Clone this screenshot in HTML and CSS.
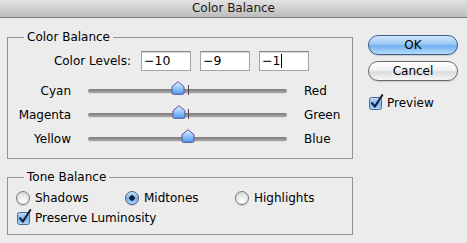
FILE: index.html
```html
<!DOCTYPE html>
<html lang="en">
<head>
  <meta charset="UTF-8">
  <title>Color Balance</title>
  <link rel="stylesheet" href="styles.css">
</head>
<body>
  <div class="titlebar">Color Balance</div>

  <div class="dialog">
    <div class="main">
      <fieldset class="group balance">
        <legend>Color Balance</legend>
        <div class="levels-row">
          <span class="levels-label">Color Levels:</span>
          <span class="field">−10</span>
          <span class="field">−9</span>
          <span class="field">−1<span class="caret"></span></span>
        </div>

        <div class="slider-row">
          <span class="left-label">Cyan</span>
          <div class="track">
            <span class="tick"></span>
            <svg class="thumb" style="left: 45%" width="14" height="14" viewBox="0 0 14 14"><use href="#thumb"/></svg>
          </div>
          <span class="right-label">Red</span>
        </div>
        <div class="slider-row">
          <span class="left-label">Magenta</span>
          <div class="track">
            <span class="tick"></span>
            <svg class="thumb" style="left: 45.5%" width="14" height="14" viewBox="0 0 14 14"><use href="#thumb"/></svg>
          </div>
          <span class="right-label">Green</span>
        </div>
        <div class="slider-row">
          <span class="left-label">Yellow</span>
          <div class="track">
            <span class="tick"></span>
            <svg class="thumb" style="left: 50%" width="14" height="14" viewBox="0 0 14 14"><use href="#thumb"/></svg>
          </div>
          <span class="right-label">Blue</span>
        </div>
      </fieldset>

      <fieldset class="group tone">
        <legend>Tone Balance</legend>
        <div class="radio-row">
          <label class="option"><span class="radio"></span>Shadows</label>
          <label class="option"><span class="radio on"></span>Midtones</label>
          <label class="option"><span class="radio"></span>Highlights</label>
        </div>
        <label class="check-row">
          <svg class="check" width="16" height="16" viewBox="0 0 16 16"><use href="#check"/></svg>Preserve Luminosity
        </label>
      </fieldset>
    </div>

    <div class="side">
      <button class="btn default">OK</button>
      <button class="btn">Cancel</button>
      <label class="check-row preview">
        <svg class="check" width="16" height="16" viewBox="0 0 16 16"><use href="#check"/></svg>Preview
      </label>
    </div>
  </div>

  <svg width="0" height="0" class="defs">
    <defs>
      <linearGradient id="thumbFill" x1="0" y1="0" x2="0" y2="1">
        <stop offset="0" stop-color="#e4f2ff"/>
        <stop offset="0.45" stop-color="#9cccf8"/>
        <stop offset="1" stop-color="#4c9cf0"/>
      </linearGradient>
      <linearGradient id="checkFill" x1="0" y1="0" x2="0" y2="1">
        <stop offset="0" stop-color="#c9e2fa"/>
        <stop offset="0.5" stop-color="#7cb6ec"/>
        <stop offset="1" stop-color="#a9d6fb"/>
      </linearGradient>
      <symbol id="thumb" viewBox="0 0 14 14">
        <path d="M7 0.7 L13 5.6 V12 Q13 13.3 11.7 13.3 H2.3 Q1 13.3 1 12 V5.6 Z" fill="url(#thumbFill)" stroke="#5b4e9c" stroke-width="1" stroke-linejoin="round"/>
      </symbol>
      <symbol id="check" viewBox="0 0 16 16">
        <rect x="1.5" y="3.5" width="12" height="12" rx="2" fill="url(#checkFill)" stroke="#4f6a98"/>
        <path d="M4 9.2 L6.8 12.6 L14.2 1.2" fill="none" stroke="#16203a" stroke-width="2.1" stroke-linecap="round" stroke-linejoin="round"/>
      </symbol>
    </defs>
  </svg>
</body>
</html>
```

FILE: styles.css
```css
body {
  margin: 0;
  background: #ececec;
  font-family: "DejaVu Sans", sans-serif;
  font-size: 12px;
  color: #000;
  width: 467px;
  height: 243px;
  overflow: hidden;
}
.defs {
  position: absolute;
}
.titlebar {
  height: 17px;
  line-height: 17px;
  text-align: center;
  background: linear-gradient(#e2e2e2, #bdbdbd);
  border-bottom: 1px solid #7b7b7b;
  color: #1a1a1a;
}
.dialog {
  display: flex;
  padding-left: 7px;
}
.main {
  width: 346px;
}
.group {
  margin: 12px 0 0;
  padding: 0 0 7px;
  border: 1px solid #939393;
  min-width: 0;
}
.group legend {
  margin-left: 16px;
  padding: 0 3px;
  line-height: 14px;
}
.tone {
  margin-top: 11px;
}
.levels-row {
  display: flex;
  align-items: center;
  margin-top: 7px;
  height: 20px;
}
.levels-label {
  width: 123px;
  text-align: right;
  margin-right: 10px;
}
.field {
  box-sizing: border-box;
  width: 50px;
  height: 20px;
  margin-right: 9px;
  padding-left: 2px;
  line-height: 18px;
  font-size: 12.5px;
  background: #fff;
  border: 1px solid #a4a4a4;
  border-top-color: #8a8a8a;
  box-shadow: inset 0 1px 1px #d6d6d6;
}
.caret {
  display: inline-block;
  width: 1px;
  height: 14px;
  margin-left: 1px;
  background: #000;
  vertical-align: -3px;
}
.slider-row {
  display: grid;
  grid-template-columns: 63px 199px auto;
  column-gap: 17px;
  align-items: center;
  height: 24px;
}
.slider-row:first-of-type,
.levels-row + .slider-row {
  margin-top: 8px;
}
.left-label {
  text-align: right;
}
.track {
  position: relative;
  height: 4px;
  border-radius: 2px;
  background: linear-gradient(#7c7c7c, #a9a9a9);
  box-shadow: 0 1px 0 #dcdcdc;
}
.tick {
  position: absolute;
  left: 50%;
  top: -4px;
  width: 1px;
  height: 10px;
  background: #4a4a4a;
}
.thumb {
  position: absolute;
  top: -8px;
  transform: translateX(-50%);
}
.radio-row {
  display: flex;
  align-items: center;
  height: 18px;
  margin-top: 5px;
  padding-left: 8px;
}
.option {
  display: flex;
  align-items: center;
  width: 110px;
}
.option:first-child {
  width: 109px;
}
.radio {
  box-sizing: border-box;
  width: 14px;
  height: 14px;
  margin-right: 5px;
  border-radius: 50%;
  border: 1px solid #7a7a7a;
  background: radial-gradient(circle at 50% 75%, #ffffff, #e4e4e4 60%, #c8c8c8);
  box-shadow: 0 1px 1px rgba(0, 0, 0, 0.15);
}
.radio.on {
  border-color: #4a5f88;
  background: radial-gradient(circle, #16203a 0 2.5px, transparent 3px),
              linear-gradient(#c6e0fa, #78b2ec 55%, #a6d4fb);
}
.check-row {
  display: flex;
  align-items: center;
  height: 18px;
  margin-top: 2px;
  padding-left: 8px;
}
.check {
  margin: -3px 3px 0 0;
}
.side {
  display: flex;
  flex-direction: column;
  width: 90px;
  margin-left: 15px;
}
.btn {
  box-sizing: border-box;
  height: 20px;
  padding: 0;
  font-family: inherit;
  font-size: 12px;
  color: #000;
  border: 1px solid #6a6a6a;
  border-radius: 10px;
  background: linear-gradient(#ffffff, #f2f2f2 45%, #dcdcdc 55%, #f6f6f6);
  box-shadow: 0 1px 1px rgba(0, 0, 0, 0.15);
}
.btn.default {
  margin-top: 17px;
  margin-bottom: 6px;
  border-color: #3e5b8a;
  background: linear-gradient(#d2e7fb, #9bc9f4 45%, #6fb0ee 55%, #b5defe);
}
.preview {
  padding-left: 0;
  margin-top: 14px;
  height: 16px;
}
```
